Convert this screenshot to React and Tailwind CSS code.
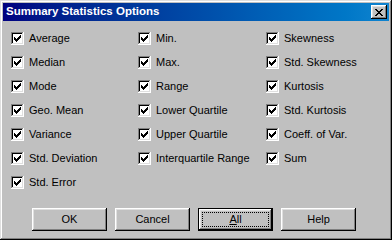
import React from "react";

const COLS = [
  ["Average", "Median", "Mode", "Geo. Mean", "Variance", "Std. Deviation", "Std. Error"],
  ["Min.", "Max.", "Range", "Lower Quartile", "Upper Quartile", "Interquartile Range"],
  ["Skewness", "Std. Skewness", "Kurtosis", "Std. Kurtosis", "Coeff. of Var.", "Sum"],
];

const RAISED =
  "shadow-[inset_-1px_-1px_#000000,inset_1px_1px_#ffffff,inset_-2px_-2px_#808080,inset_2px_2px_#dfdfdf]";

function Check() {
  return (
    <span className="w-[13px] h-[13px] shrink-0 bg-white flex items-center justify-center shadow-[inset_-1px_-1px_#ffffff,inset_1px_1px_#808080,inset_-2px_-2px_#dfdfdf,inset_2px_2px_#000000]">
      <svg width="7" height="7" viewBox="0 0 7 7" shapeRendering="crispEdges">
        <rect x="6" y="0" width="1" height="1" />
        <rect x="5" y="1" width="2" height="1" />
        <rect x="0" y="2" width="1" height="1" />
        <rect x="4" y="2" width="3" height="1" />
        <rect x="0" y="3" width="2" height="1" />
        <rect x="3" y="3" width="3" height="1" />
        <rect x="0" y="4" width="5" height="1" />
        <rect x="1" y="5" width="3" height="1" />
        <rect x="2" y="6" width="1" height="1" />
      </svg>
    </span>
  );
}

function Button({ children, def }) {
  if (def) {
    return (
      <div className="w-[75px] h-[23px] border border-black bg-[#c0c0c0]">
        <div className={`h-full p-[3px] ${RAISED}`}>
          <div className="h-full border border-dotted border-black flex items-center justify-center">
            {children}
          </div>
        </div>
      </div>
    );
  }
  return (
    <div className={`w-[75px] h-[23px] bg-[#c0c0c0] flex items-center justify-center ${RAISED}`}>
      {children}
    </div>
  );
}

export default function App() {
  return (
    <div
      className="w-[392px] h-[240px] bg-[#c0c0c0] p-[3px] flex flex-col text-black text-[11px] shadow-[inset_-1px_-1px_#000000,inset_1px_1px_#dfdfdf,inset_-2px_-2px_#808080,inset_2px_2px_#ffffff]"
      style={{ fontFamily: '"Liberation Sans", Arial, sans-serif' }}
    >
      <div className="h-[18px] flex items-center bg-gradient-to-r from-[#000080] to-[#1084d0] pl-[3px] pr-[2px]">
        <span className="flex-1 text-white font-bold text-[11.5px]">Summary Statistics Options</span>
        <div className={`w-[16px] h-[14px] bg-[#c0c0c0] flex items-center justify-center ${RAISED}`}>
          <svg width="8" height="7" viewBox="0 0 8 7" shapeRendering="crispEdges">
            <path d="M0 0h2v1h1v1h2v-1h1v-1h2v1h-1v1h-1v1h-1v1h1v1h1v1h1v1h-2v-1h-1v-1h-2v1h-1v1h-2v-1h1v-1h1v-1h1v-1h-1v-1h-1v-1h-1z" />
          </svg>
        </div>
      </div>

      <div className="flex pl-[8px] pt-[5px]">
        {COLS.map((col, i) => (
          <div key={i} className={`flex flex-col ${i === 0 ? "w-[127px]" : i === 1 ? "w-[128px]" : "flex-1"}`}>
            {col.map((label) => (
              <div key={label} className="h-[24px] flex items-center gap-[5px]">
                <Check />
                <span>{label}</span>
              </div>
            ))}
          </div>
        ))}
      </div>

      <div className="flex pl-[29px] gap-[8px] mt-[14px]">
        <Button>OK</Button>
        <Button>Cancel</Button>
        <Button def>
          <span>
            <span className="underline">A</span>ll
          </span>
        </Button>
        <Button>Help</Button>
      </div>
    </div>
  );
}
